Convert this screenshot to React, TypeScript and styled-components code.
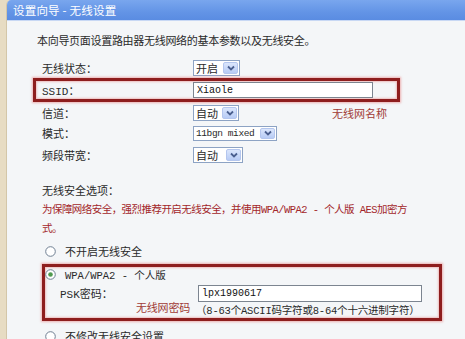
import { FC, ReactNode } from 'react';
import styled, { createGlobalStyle } from 'styled-components';

const GlobalStyle = createGlobalStyle`
  html, body {
    margin: 0;
    padding: 0;
    background: #e7dcc3;
    overflow: hidden;
  }
  body {
    font-family: "Liberation Mono", "Noto Sans CJK SC", monospace;
    font-size: 11px;
    color: #2a2a2a;
  }
`;

const Frame = styled.div`
  width: 465px;
  height: 339px;
  display: flex;
  background: #e7dcc3;
  overflow: hidden;
`;

const Panel = styled.div`
  margin-left: 6px;
  flex: 1;
  background: #f4f6f8;
  border-left: 1px solid #d3c6a8;
  border-top-left-radius: 5px;
  overflow: hidden;
`;

const TitleBar = styled.div`
  height: 21px;
  display: flex;
  align-items: center;
  padding-left: 6px;
  background: linear-gradient(#79a6ee, #6394e6 60%, #5a8ce2);
  border-bottom: 1px solid #c8d8f4;
  box-sizing: border-box;
  color: #ffffff;
  font-family: "Noto Sans CJK SC", sans-serif;
  font-size: 11.5px;
  letter-spacing: 0.2px;
`;

const Intro = styled.div`
  margin: 11px 0 0 30px;
  line-height: 16px;
  font-family: "Noto Sans CJK SC", sans-serif;
  letter-spacing: -0.3px;
  white-space: nowrap;
`;

const Form = styled.div`
  margin: 9px 0 0 35px;
`;

const Row = styled.div<{ $h: number }>`
  position: relative;
  display: grid;
  grid-template-columns: 151px auto;
  align-items: center;
  justify-items: start;
  height: ${p => p.$h}px;
`;

const Highlight = styled.div<{ $w: number }>`
  position: relative;
  box-sizing: border-box;
  width: ${p => p.$w}px;
  border: 3px solid #8e1e1e;
  box-shadow: 0 0 2px 1px rgba(230, 120, 120, 0.55),
    inset 0 0 2px 1px rgba(230, 120, 120, 0.45);
`;

const SsidBox = styled(Highlight)`
  margin-left: -9px;
  padding-left: 6px;
  height: 24px;
  display: grid;
  grid-template-columns: 151px auto;
  align-items: center;
  justify-items: start;
`;

const Label = styled.span`
  white-space: nowrap;
`;

const Note = styled.span<{ $left: number; $shift?: number }>`
  position: absolute;
  left: ${p => p.$left}px;
  top: 50%;
  transform: translateY(${p => p.$shift ?? -50}%);
  color: #a03a35;
  font-family: "Noto Sans CJK SC", sans-serif;
  font-size: 11px;
  white-space: nowrap;
`;

const SelectBox = styled.div<{ $w: number; $h: number }>`
  box-sizing: border-box;
  width: ${p => p.$w}px;
  height: ${p => p.$h}px;
  display: flex;
  align-items: stretch;
  background: #ffffff;
  border: 1px solid #8da3c4;
`;

const SelectText = styled.span<{ $fs: number }>`
  flex: 1;
  display: flex;
  align-items: center;
  padding-left: 2px;
  white-space: nowrap;
  overflow: hidden;
  font-size: ${p => p.$fs}px;
  letter-spacing: ${p => (p.$fs < 11 ? '-0.4px' : '0')};
`;

const SelectButton = styled.span`
  width: 15px;
  margin: 1px;
  display: flex;
  align-items: center;
  justify-content: center;
  background: linear-gradient(#dbe6fc, #b7cbf5);
  border: 1px solid #b4c6ee;
  border-radius: 2px;
  box-sizing: border-box;
`;

const Select: FC<{ w: number; h?: number; fs?: number; children: ReactNode }> = ({
  w,
  h = 16,
  fs = 11,
  children,
}) => (
  <SelectBox $w={w} $h={h}>
    <SelectText $fs={fs}>{children}</SelectText>
    <SelectButton>
      <svg width="8" height="6" viewBox="0 0 8 6">
        <path
          d="M1 1.5 L4 4.5 L7 1.5"
          fill="none"
          stroke="#4a5f8f"
          strokeWidth="1.8"
        />
      </svg>
    </SelectButton>
  </SelectBox>
);

const Input = styled.div<{ $w: number; $h: number }>`
  box-sizing: border-box;
  width: ${p => p.$w}px;
  height: ${p => p.$h}px;
  display: flex;
  align-items: center;
  padding-left: 3px;
  background: #ffffff;
  border: 1px solid #7c8590;
  font-size: 10px;
  color: #111;
`;

const Heading = styled.div`
  margin: 16px 0 0 0;
  line-height: 16px;
  font-family: "Noto Sans CJK SC", sans-serif;
`;

const Warning = styled.div`
  margin-top: 3px;
  line-height: 19px;
  color: #a3262a;
  font-size: 10.5px;
  letter-spacing: -0.55px;
  white-space: nowrap;
`;

const RadioRow = styled.div<{ $h: number }>`
  display: flex;
  align-items: center;
  gap: 9px;
  height: ${p => p.$h}px;
  padding-left: 3px;
  font-family: "Noto Sans CJK SC", sans-serif;
  white-space: nowrap;
`;

const RadioMark: FC<{ checked?: boolean }> = ({ checked }) => (
  <svg width="11" height="11" viewBox="0 0 11 11">
    <circle cx="5.5" cy="5.5" r="4.8" fill="#ffffff" stroke="#6f7f92" />
    {checked && <circle cx="5.5" cy="5.5" r="2.3" fill="#4f9a4f" />}
  </svg>
);

const SecurityBox = styled(Highlight)`
  margin-top: 4px;
`;

const FirstRadio = styled(RadioRow)`
  margin-top: 3px;
`;

const BoxRadio = styled(RadioRow)`
  padding-left: 0;
  font-family: "Liberation Mono", "Noto Sans CJK SC", monospace;
  font-size: 10.5px;
`;

const PskRow = styled.div`
  position: relative;
  margin-top: 2px;
  padding-left: 15px;
  display: grid;
  grid-template-columns: 138px auto;
  align-items: center;
  height: 20px;
`;

const Hint = styled.div`
  position: relative;
  padding-left: 151px;
  height: 14px;
  line-height: 14px;
  margin-top: 1px;
  font-size: 10.5px;
  letter-spacing: -0.2px;
  white-space: nowrap;
`;

const LastRadio = styled(RadioRow)`
  margin-top: 7px;
`;

export default function App() {
  return (
    <Frame>
      <GlobalStyle />
      <Panel>
        <TitleBar>设置向导 - 无线设置</TitleBar>
        <Intro>本向导页面设置路由器无线网络的基本参数以及无线安全。</Intro>
        <Form>
          <Row $h={21}>
            <Label>无线状态：</Label>
            <Select w={47}>开启</Select>
          </Row>
          <SsidBox $w={367}>
            <Label>SSID：</Label>
            <Input $w={180} $h={16}>Xiaole</Input>
          </SsidBox>
          <Row $h={21}>
            <Label>信道：</Label>
            <Select w={46}>自动</Select>
            <Note $left={290}>无线网名称</Note>
          </Row>
          <Row $h={20}>
            <Label>模式：</Label>
            <Select w={84} h={15} fs={9.5}>
              11bgn mixed
            </Select>
          </Row>
          <Row $h={23}>
            <Label>频段带宽：</Label>
            <Select w={50}>自动</Select>
          </Row>
          <Heading>无线安全选项：</Heading>
          <Warning>
            为保障网络安全，强烈推荐开启无线安全，并使用WPA/WPA2 - 个人版 AES加密方
            <br />
            式。
          </Warning>
          <FirstRadio $h={18}>
            <RadioMark />
            不开启无线安全
          </FirstRadio>
          <SecurityBox $w={400}>
            <BoxRadio $h={14}>
              <RadioMark checked />
              WPA/WPA2 - 个人版
            </BoxRadio>
            <PskRow>
              <Label>PSK密码：</Label>
              <Input $w={224} $h={17}>lpx1990617</Input>
            </PskRow>
            <Hint>
              （8-63个ASCII码字符或8-64个十六进制字符）
              <Note $left={91} $shift={-80}>
                无线网密码
              </Note>
            </Hint>
          </SecurityBox>
          <LastRadio $h={16}>
            <RadioMark />
            不修改无线安全设置
          </LastRadio>
        </Form>
      </Panel>
    </Frame>
  );
}
